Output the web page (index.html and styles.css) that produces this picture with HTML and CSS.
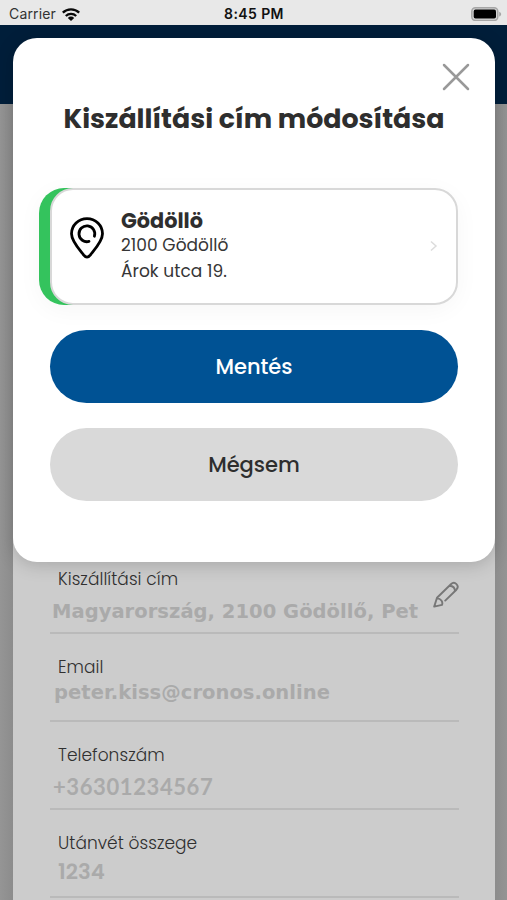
FILE: index.html
```html
<!DOCTYPE html>
<html lang="hu">
<head>
<meta charset="utf-8">
<title>Kiszállítási cím módosítása</title>
<link rel="stylesheet" href="styles.css">
</head>
<body>
<div class="screen">
  <header class="status">
    <div class="carrier"><span class="carrier-name">Carrier</span>
      <svg class="wifi" width="18" height="13" viewBox="0 0 18 13"><g fill="none" stroke="#0a0a0a" stroke-width="2.3"><path d="M.8 4.700a11.800 11.800 0 0 1 16.400 0"/><path d="M3.800 8a7.500 7.500 0 0 1 10.400 0"/></g><path d="M9 13 5.800 9.900a4.600 4.600 0 0 1 6.400 0z" fill="#0a0a0a"/></svg>
    </div>
    <span class="clock">8:45 PM</span>
    <svg class="battery" width="31" height="14" viewBox="0 0 31 14"><rect x=".8" y=".8" width="26" height="12.600" rx="3.600" fill="#d4d4d4" stroke="#a6a6a6" stroke-width="1.500"/><rect x="2.700" y="2.600" width="22.300" height="9" rx="1.800" fill="#000"/><path d="M28.200 4.700c2.600.8 2.600 4 0 4.800z" fill="#a6a6a6"/></svg>
  </header>
  <div class="navbar"></div>
  <main class="page">
    <div class="sheet">
      <section class="field"><div class="label">Kiszállítási cím</div><div class="value v1">Magyarország, 2100 Gödöllő, Pet</div>
        <svg class="pencil" width="28" height="28" viewBox="0 0 28 28" fill="none" stroke="#777" stroke-width="1.900" stroke-linecap="round" stroke-linejoin="round"><path d="M14.200 19.600 25.400 8.700c3.600-4-1.600-9.100-5.500-5.500L6 16.800 3.200 25.600l7.800-1.700c1.200-3-1.300-6.500-4.600-6.500M18.700 4.700c3 .3 5.200 2.400 5.200 5.200"/></svg></section>
      <section class="field"><div class="label">Email</div><div class="value v2">peter.kiss@cronos.online</div></section>
      <section class="field"><div class="label">Telefonszám</div><div class="value v3">+36301234567</div></section>
      <section class="field"><div class="label">Utánvét összege</div><div class="value v4">1234</div></section>
    </div>
  </main>
  <div class="modal" role="dialog">
    <div class="modal-top"><svg width="28" height="28" viewBox="0 0 28 28"><path d="M2 2 26 26M26 2 2 26" stroke="#999" stroke-width="2.500" stroke-linecap="round"/></svg></div>
    <h1>Kiszállítási cím módosítása</h1>
    <div class="accent"><div class="address">
      <svg class="pin" width="36" height="42" viewBox="0 0 36 42" fill="none" stroke="#000" stroke-width="2.800" stroke-linecap="round" stroke-linejoin="round"><path d="M18 40.200c-1.400 0-2.400-1-3.200-2C11.300 33.600 2.500 24.500 2.500 16.800a15.500 15.200 0 0 1 31 0c0 7.700-8.800 16.800-12.300 21.400-.8 1-1.800 2-3.200 2z"/><path d="M20 24.400a7.900 7.900 0 1 1 5.400-5.200"/></svg>
      <div class="lines"><div class="city">Gödöllö</div><div class="line">2100 Gödöllő</div><div class="line">Árok utca 19.</div></div>
      <svg class="chevron" width="8" height="12" viewBox="0 0 8 12"><path d="m1 1.500 5 4.500-5 4.500" fill="none" stroke="#dcdcdc" stroke-width="1.500"/></svg>
    </div></div>
    <button class="btn save">Mentés</button>
    <button class="btn cancel">Mégsem</button>
  </div>
</div>
</body>
</html>
```
FILE: styles.css
```css
* { box-sizing: border-box; }
body { margin: 0; font-family: Poppins, Inter, "Open Sans", sans-serif; color: #2e2e2e; }
.screen { position: relative; width: 507px; height: 900px; overflow: hidden; display: flex; flex-direction: column; background: #909090; }
.status { height: 25px; flex: none; background: #e8e8e8; display: grid; grid-template-columns: 1fr auto 1fr; align-items: center; padding: 3px 5px 0 9px; font-family: Inter, sans-serif; }
.carrier { display: flex; align-items: center; gap: 6px; font-size: 14px; line-height: 20px; color: #333; letter-spacing: .15px; }
.clock { font-size: 14px; line-height: 20px; font-weight: 600; color: #111; letter-spacing: .4px; margin-right: 3px; }
.battery { justify-self: end; }
.navbar { height: 79px; flex: none; background: #001e3a; }
.page { flex: 1; padding: 0 12px 0 13px; background: linear-gradient(90deg, #959595, #8c8c8c 13px, #8c8c8c 495px, #949494); }
.sheet { height: 796px; padding: 442px 36px 0 37px; background: #ccc; }
.field { height: 88px; border-bottom: 2px solid #bababa; position: relative; }
.label { padding: 21px 0 0 8px; height: 45px; font-size: 17px; line-height: 25px; font-weight: 300; color: #303030; letter-spacing: .05px; white-space: nowrap; }
.value { font-size: 19.5px; line-height: 24px; font-weight: 700; color: #aaa; white-space: nowrap; }
.v1, .v2 { font-family: "DejaVu Sans", sans-serif; letter-spacing: .04px; }
.v1 { padding: 9px 0 0 2px; }
.v2 { padding: 2px 0 0 4px; }
.v3 { font-family: Lato, sans-serif; padding: 8px 0 0 3px; font-size: 22px; letter-spacing: .6px; }
.v4 { padding: 5px 0 0 8px; font-size: 21.3px; font-weight: 600; }
.pencil { position: absolute; right: 0; top: 35px; }
.modal { position: absolute; left: 13px; top: 38px; width: 482px; height: 524px; padding: 25px 37px 0; background: #fff; border-radius: 24px; box-shadow: 0 3px 18px rgba(0,0,0,.18); display: flex; flex-direction: column; }
.modal-top { height: 28px; flex: none; display: flex; justify-content: flex-end; margin-right: -12px; }
h1 { margin: 10px 0 0; height: 36px; font-size: 26.85px; line-height: 36px; font-weight: 700; text-align: center; white-space: nowrap; }
.accent { height: 117px; flex: none; margin: 51px 0 0 -11px; padding-left: 11px; border-radius: 25px; background: linear-gradient(90deg, #34c35d 60px, transparent 60px); box-shadow: 0 5px 24px rgba(0,0,0,.04); }
.address { height: 117px; border: 2px solid #d8d8d8; border-radius: 23px; background: #fff; display: flex; align-items: center; padding: 0 18px 0 17px; }
.pin { margin-top: -17px; flex: none; }
.lines { margin-left: 16px; flex: 1; white-space: nowrap; }
.city { font-size: 20.8px; line-height: 24px; font-weight: 700; }
.line { font-size: 17px; line-height: 25.6px; color: #363636; letter-spacing: .05px; }
.chevron { margin-top: -2px; }
.btn { height: 73px; flex: none; border: 0; border-radius: 37px; font: 500 21px/30px Poppins, Inter, sans-serif; }
.save { margin-top: 25px; background: #005294; color: #fff; }
.cancel { margin-top: 25px; background: #d9d9d9; color: #2e2e2e; }
```
